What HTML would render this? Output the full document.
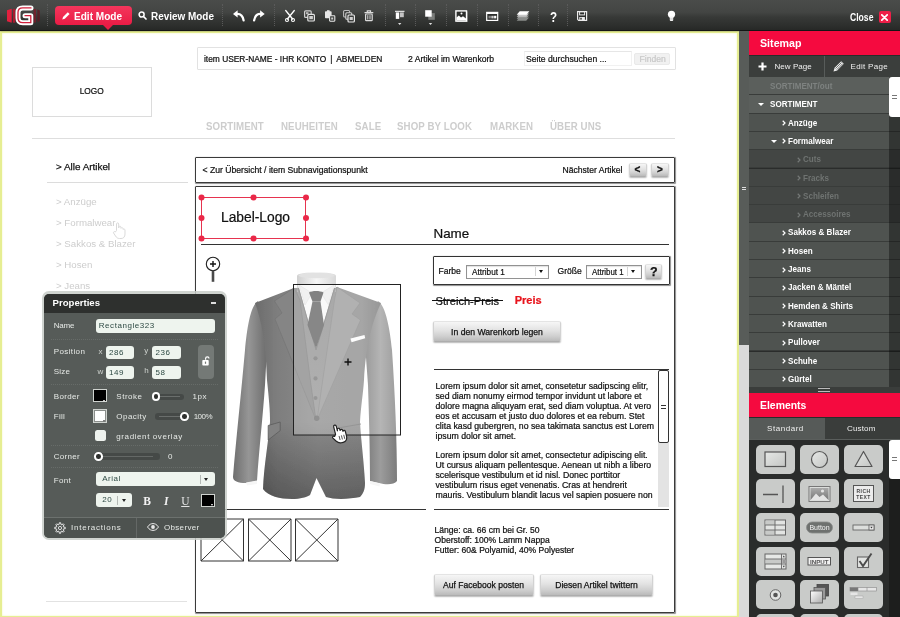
<!DOCTYPE html>
<html>
<head>
<meta charset="utf-8">
<title>Wireframe Editor</title>
<style>
*{box-sizing:border-box;margin:0;padding:0}
html,body{width:900px;height:617px;overflow:hidden;background:#fff;font-family:"Liberation Sans",sans-serif;}
.abs{position:absolute}
#app{position:relative;width:900px;height:617px;overflow:hidden;background:#fff;will-change:transform}
/* toolbar */
#tb{position:absolute;left:0;top:0;width:900px;height:31px;box-shadow:0 0 1.5px rgba(0,0,0,.55);background:linear-gradient(#4a4c4a 0,#434543 40%,#373937 55%,#2c2e2c 85%,#252725 100%);}
.sep{position:absolute;top:4px;height:22px;width:0;border-left:1px dotted #5a5a5a}
.tbt{position:absolute;color:#fff;font-weight:bold;font-size:10.5px;line-height:12px;white-space:nowrap}
/* canvas */
#cv{position:absolute;left:0;top:31px;width:738.5px;height:587px;background:#fff;border:2px solid #e6ee92;box-shadow:inset 0 0 2px 0 #eef4b4}
.t{position:absolute;white-space:nowrap;color:#111;-webkit-text-stroke:.22px}
.nav{position:absolute;top:120.8px;font-size:10.3px;font-weight:bold;color:#cdcdcd;white-space:nowrap;line-height:12px;letter-spacing:.1px;transform-origin:left center;transform:scaleX(.94)}
.ln{position:absolute;font-size:9.7px;color:#cdcdcd;left:56px;line-height:12px;white-space:nowrap}
.btn{position:absolute;background:linear-gradient(#f6f6f6,#e2e2e2 45%,#cfcfcf 75%,#bababa);border:1px solid #d2d2d2;border-top-color:#e4e4e4;border-bottom-color:#adadad;border-radius:2px;font-size:9px;color:#111;text-align:center;white-space:nowrap;box-shadow:0 1px 1.5px rgba(0,0,0,.28);-webkit-text-stroke:.25px}
/* sidebar */
#sb{position:absolute;left:748.5px;top:31px;width:151.5px;height:586px;background:#2a2c2b}
.hd{position:absolute;left:0;width:151px;background:#f50a3f;color:#fff;font-weight:bold;font-size:12.5px}
.row{position:absolute;left:0;width:151.5px;height:18px;background:#4f5350;border-bottom:1px solid #393c3a;color:#fff;font-weight:bold;font-size:9.5px;line-height:18px;white-space:nowrap}
.row.l1{background:#5b5f5c}
.row.l3{background:#434644;color:#6f7371}
.row.dim{color:#7e8280}
.row span{position:absolute;top:0;transform-origin:left center;transform:scaleX(.85)}
.tile{position:absolute;width:39px;height:29px;background:#c9cbc9;border-radius:5px}
/* properties */
#pp{position:absolute;left:41.7px;top:291px;width:185.8px;height:249.3px;border-radius:7px;background:rgba(200,205,200,.85);}
#ppi{position:absolute;left:2.3px;top:2.5px;width:181px;height:244px;border-radius:5px;background:#565b58;overflow:hidden}
.pl{position:absolute;font-size:8px;color:#e6e9e6;line-height:10px;white-space:nowrap;letter-spacing:.55px}
.pin{position:absolute;background:#eef4ee;border-radius:3px;font-size:8px;letter-spacing:.55px;color:#2e4a44;line-height:13.5px;padding-left:3px;white-space:nowrap}
.dot{position:absolute;left:7px;width:167px;height:0;border-top:1px dotted #676c69}
</style>
</head>
<body>
<div id="app">

<!-- ================= CANVAS ================= -->
<div id="cv"></div>
<!-- page content (absolute page coords) -->
<div id="pg" class="abs" style="left:0;top:0;width:739px;height:617px;overflow:hidden">
<!-- logo box -->
<div class="abs" style="left:32px;top:67px;width:120px;height:50px;border:1px solid #dcdcdc"></div>
<div class="t" style="left:79.7px;top:86px;font-size:8.3px;line-height:11px">LOGO</div>
<!-- top bar -->
<div class="abs" style="left:197px;top:47px;width:479px;height:23px;border:1px solid #e2e2e2;border-radius:1px"></div>
<div class="t" style="left:204px;top:53px;font-size:8.4px;line-height:12px">item USER-NAME - IHR KONTO <span style="margin:0 1.8px">|</span> ABMELDEN</div>
<div class="t" style="left:408px;top:53px;font-size:8.6px;line-height:12px">2 Artikel im Warenkorb</div>
<div class="abs" style="left:524px;top:51px;width:108px;height:15px;border:1px solid #f1f1f1;border-top-color:#e6e6e6"></div>
<div class="t" style="left:526px;top:53px;font-size:8.6px;line-height:12px">Seite durchsuchen ...</div>
<div class="abs" style="left:634px;top:52.5px;width:36px;height:12.5px;background:#f1f1f1;border:1px solid #e9e9e9;border-radius:2px"></div>
<div class="t" style="left:639.5px;top:53px;font-size:8.6px;line-height:12px;color:#c9c9c9">Finden</div>
<!-- main nav -->
<div class="nav" style="left:206px">SORTIMENT</div>
<div class="nav" style="left:281px">NEUHEITEN</div>
<div class="nav" style="left:354.5px">SALE</div>
<div class="nav" style="left:396.5px">SHOP BY LOOK</div>
<div class="nav" style="left:489.5px">MARKEN</div>
<div class="nav" style="left:550px">ÜBER UNS</div>
<div class="abs" style="left:32px;top:138px;width:643px;height:1px;background:#dedede"></div>
<!-- left nav -->
<div class="t" style="left:56px;top:160.5px;font-size:9.9px;line-height:12px;color:#111;-webkit-text-stroke:.25px #111">&gt; Alle Artikel</div>
<div class="abs" style="left:47px;top:182px;width:141px;height:1px;background:#dcdcdc"></div>
<div class="ln" style="top:196px">&gt; Anzüge</div>
<div class="ln" style="top:216.5px">&gt; Formalwear</div>
<div class="ln" style="top:237.5px">&gt; Sakkos &amp; Blazer</div>
<div class="ln" style="top:258.5px">&gt; Hosen</div>
<div class="ln" style="top:279.5px">&gt; Jeans</div>
<div class="abs" style="left:46px;top:601px;width:141px;height:1px;background:#e2e2e2"></div>
<svg class="abs" style="left:112px;top:222px" width="15" height="17" viewBox="0 0 13 17" opacity=".55"><path d="M3.5,8.5 L3.5,2 C3.5,0.5 5.7,0.5 5.7,2 L5.7,6 L5.9,4.8 C6.3,3.8 7.8,4 7.9,5 L8,6.3 C8.4,5.3 9.9,5.5 10,6.5 L10.1,7.5 C10.6,6.7 12,7 12,8 L12,12 C12,15 10.5,16.5 8,16.5 L6.5,16.5 C4.5,16.5 3.5,15.5 2.5,14 L0.6,11 C0,9.8 1.5,9 2.3,10 Z" fill="#fff" stroke="#bbb" stroke-width="1" stroke-linejoin="round"/></svg>
<!-- breadcrumb box -->
<div class="abs" style="left:194.5px;top:156.5px;width:480px;height:26.5px;border:1px solid #3a3a3a;border-radius:1px;box-shadow:.7px .7px 1px rgba(0,0,0,.45)"></div>
<div class="t" style="left:202.5px;top:164.5px;font-size:8.65px;line-height:11px">&lt; Zur Übersicht / item Subnavigationspunkt</div>
<div class="t" style="left:562.5px;top:164.5px;font-size:8.57px;line-height:11px">Nächster Artikel</div>
<div class="btn" style="left:628.5px;top:163px;width:18px;height:14px;font-weight:bold;font-size:10px;line-height:12px">&lt;</div>
<div class="btn" style="left:651px;top:163px;width:18px;height:14px;font-weight:bold;font-size:10px;line-height:12px">&gt;</div>
<!-- product box -->
<div class="abs" style="left:194.5px;top:186px;width:480px;height:427px;border:1px solid #3a3a3a;border-radius:1px;box-shadow:.7px .7px 1px rgba(0,0,0,.45)"></div>
<!-- label logo selected -->
<div class="abs" style="left:201px;top:197px;width:105px;height:41.5px;border:1px solid #e6334f"></div>
<div class="t" style="left:221px;top:209px;font-size:13.8px;line-height:18px">Label-Logo</div>
<svg class="abs" style="left:196px;top:192px" width="116" height="52" viewBox="0 0 116 52"><g fill="#ea2848"><circle cx="5.5" cy="5.5" r="3"/><circle cx="57.5" cy="5.5" r="3"/><circle cx="110" cy="5.5" r="3"/><circle cx="5.5" cy="26" r="3"/><circle cx="110" cy="26" r="3"/><circle cx="5.5" cy="46.5" r="3"/><circle cx="57.5" cy="46.5" r="3"/><circle cx="110" cy="46.5" r="3"/></g></svg>
<div class="abs" style="left:201px;top:243.5px;width:468px;height:1px;background:#333"></div>
<div class="t" style="left:433.5px;top:224.5px;font-size:13.4px;line-height:18px">Name</div>
<!-- magnifier -->
<svg class="abs" style="left:204px;top:255px" width="18" height="28" viewBox="0 0 18 28"><circle cx="9" cy="9" r="6.7" fill="#fff" stroke="#222" stroke-width="1.1"/><path d="M6 9h6M9 6v6" stroke="#111" stroke-width="1.4"/><path d="M9 15.8V26.8" stroke="#4a4a4a" stroke-width="2.6"/></svg>
<!-- attribute box -->
<div class="abs" style="left:433.3px;top:256px;width:236.3px;height:29px;border:1px solid #333;border-radius:1px;box-shadow:.7px .7px 1px rgba(0,0,0,.45)"></div>
<div class="t" style="left:438.5px;top:266px;font-size:8.55px;line-height:11px">Farbe</div>
<div class="abs" style="left:466px;top:264.5px;width:82.6px;height:14px;border:1px solid #929292;background:#fff;box-shadow:inset 0 1px 1px rgba(0,0,0,.12)"></div>
<div class="t" style="left:472.2px;top:266.3px;font-size:9.6px;line-height:11px;transform-origin:left center;transform:scaleX(.855)">Attribut 1</div>
<div class="abs" style="left:534.5px;top:267px;width:1px;height:9px;background:#d4d4d4"></div>
<div class="abs" style="left:538.9px;top:270px;border-left:2.5px solid transparent;border-right:2.5px solid transparent;border-top:3.5px solid #111"></div>
<div class="t" style="left:557.5px;top:266px;font-size:8.55px;line-height:11px">Größe</div>
<div class="abs" style="left:585.5px;top:264.5px;width:56.2px;height:14px;border:1px solid #929292;background:#fff;box-shadow:inset 0 1px 1px rgba(0,0,0,.12)"></div>
<div class="t" style="left:592px;top:266.3px;font-size:9.6px;line-height:11px;transform-origin:left center;transform:scaleX(.825)">Attribut 1</div>
<div class="abs" style="left:626.5px;top:267px;width:1px;height:9px;background:#d4d4d4"></div>
<div class="abs" style="left:631.4px;top:270px;border-left:2.5px solid transparent;border-right:2.5px solid transparent;border-top:3.5px solid #111"></div>
<div class="btn" style="left:645.3px;top:263.7px;width:16.8px;height:15.2px;font-weight:bold;font-size:12.5px;line-height:14px">?</div>
<!-- price -->
<div class="t" style="left:435.6px;top:293.6px;font-size:11.1px;line-height:14px">Streich-Preis</div>
<div class="abs" style="left:432.2px;top:300.2px;width:70.8px;height:1px;background:#111"></div>
<div class="t" style="left:514.7px;top:293.3px;font-size:11px;line-height:14px;color:#e8141c;font-weight:bold">Preis</div>
<div class="btn" style="left:433.3px;top:320.7px;width:127.4px;height:21.7px;line-height:20px;font-size:8.65px">In den Warenkorb legen</div>
<!-- text area -->
<div class="abs" style="left:434px;top:369px;width:234.5px;height:1px;background:#333"></div>
<div class="abs" style="left:434px;top:509px;width:234.5px;height:1px;background:#333"></div>
<div class="abs" style="left:657.5px;top:370px;width:11px;height:137px;background:#e3e3e3"></div>
<div class="abs" style="left:657.5px;top:369.5px;width:11px;height:73.5px;background:#fff;border:1px solid #333;border-radius:2px"></div>
<div class="abs" style="left:660.5px;top:405px;width:5px;height:1px;background:#333"></div>
<div class="abs" style="left:660.5px;top:407.5px;width:5px;height:1px;background:#333"></div>
<div class="t" style="left:435.5px;top:380.5px;font-size:8.72px;line-height:10px;white-space:pre">Lorem ipsum dolor sit amet, consetetur sadipscing elitr,
sed diam nonumy eirmod tempor invidunt ut labore et
dolore magna aliquyam erat, sed diam voluptua. At vero
eos et accusam et justo duo dolores et ea rebum. Stet
clita kasd gubergren, no sea takimata sanctus est Lorem
ipsum dolor sit amet.</div>
<div class="t" style="left:435.5px;top:450px;font-size:8.72px;line-height:10px;white-space:pre">Lorem ipsum dolor sit amet, consectetur adipiscing elit.
Ut cursus aliquam pellentesque. Aenean ut nibh a libero
scelerisque vestibulum et id nisl. Donec porttitor
vestibulum risus eget venenatis. Cras at hendrerit
mauris. Vestibulum blandit lacus vel sapien posuere non</div>
<div class="t" style="left:434.5px;top:525px;font-size:8.55px;line-height:10px;white-space:pre">Länge: ca. 66 cm bei Gr. 50
Oberstoff: 100% Lamm Nappa
Futter: 60&amp; Polyamid, 40% Polyester</div>
<div class="btn" style="left:433.5px;top:573.5px;width:100px;height:22px;line-height:20px;font-size:8.55px">Auf Facebook posten</div>
<div class="btn" style="left:540px;top:573.5px;width:113px;height:22px;line-height:20px;font-size:8.6px">Diesen Artikel twittern</div>
<!-- image bottom line + thumbs -->
<div class="abs" style="left:201px;top:509px;width:225px;height:1px;background:#333"></div>
<svg class="abs" style="left:200px;top:518px" width="140" height="44" viewBox="0 0 140 44"><g fill="#fff" stroke="#333" stroke-width="1"><path d="M1 1h42.5v42H1zM1 1l42.5 42M43.5 1L1 43"/><path d="M48.5 1h42.5v42H48.5zM48.5 1l42.5 42M91 1L48.5 43"/><path d="M95.5 1h42.5v42H95.5zM95.5 1l42.5 42M138 1L95.5 43"/></g></svg>
<svg class="abs" style="left:222px;top:262px" width="190" height="248" viewBox="222 262 190 248">
<defs>
<linearGradient id="gb" x1="0" x2="1" y1="0" y2="0"><stop offset="0" stop-color="#6c6c6c"/><stop offset=".18" stop-color="#7e7e7e"/><stop offset=".5" stop-color="#8b8b8b"/><stop offset=".85" stop-color="#888"/><stop offset="1" stop-color="#747474"/></linearGradient>
<linearGradient id="gsl" x1="0" x2="1" y1="0" y2="0"><stop offset="0" stop-color="#6e6e6e"/><stop offset=".45" stop-color="#969696"/><stop offset="1" stop-color="#6a6a6a"/></linearGradient>
<linearGradient id="gsr" x1="0" x2="1" y1="0" y2="0"><stop offset="0" stop-color="#777"/><stop offset=".5" stop-color="#9c9c9c"/><stop offset="1" stop-color="#7c7c7c"/></linearGradient>
<linearGradient id="gv" x1="0" x2="0" y1="0" y2="1"><stop offset="0" stop-color="#8c8c8c"/><stop offset="1" stop-color="#969696"/></linearGradient>
<linearGradient id="gsh" x1="0" x2="0" y1="0" y2="1"><stop offset="0" stop-color="#000" stop-opacity="0"/><stop offset="1" stop-color="#000" stop-opacity=".3"/></linearGradient>
<linearGradient id="gco" x1="0" x2="1" y1="0" y2="0"><stop offset="0" stop-color="#d0d0d0"/><stop offset=".5" stop-color="#f6f6f6"/><stop offset="1" stop-color="#d8d8d8"/></linearGradient>
<filter id="bl" x="-10%" y="-10%" width="120%" height="120%"><feGaussianBlur stdDeviation=".7"/></filter>
</defs>
<g filter="url(#bl)">
<!-- sleeves -->
<path d="M258,301 C250,306 247,330 245,350 C241,395 236,440 233,477 C233,481 238,483 246,483 L257,481 C259,450 263,415 265,385 L268,330 Z" fill="url(#gsl)"/>
<path d="M378,301 C386,306 390,330 392,350 C395,395 397,440 397,481 C394,485 386,485 379,483 L370,481 C370,450 369,415 368,385 L364,330 Z" fill="url(#gsr)"/>
<path d="M246,482.5 L257,480.5 L257,484 L247,485.5 Z" fill="#f6f6f6"/>
<path d="M370,481 L380,483.5 L379.5,486.5 L370,484 Z" fill="#f6f6f6"/>
<!-- body -->
<path d="M294,288 L255,303 C262,322 266,345 267,380 C269,400 270,410 270,422 C268,445 264,465 263,489 C268,496 280,499 292,499 C300,499 307,497 310,495 L316.5,478 L326,497 C335,500 350,499 360,497 C363,494 365,490 365,483 C364,462 361,440 360,422 C361,405 363,395 364,380 C366,345 372,322 381,303 L337,287 Z" fill="url(#gb)"/>
<path d="M270,422 C268,445 264,465 263,489 C268,496 280,499 292,499 C300,499 307,497 310,495 L316.5,478 L326,497 C335,500 350,499 360,497 C363,494 365,490 365,483 C364,462 361,440 360,422 Z" fill="url(#gsh)"/>
<!-- collar cylinder -->
<path d="M297,276 C297,271 336,271 336,276 L336,292 L297,292 Z" fill="url(#gco)"/>
<ellipse cx="316.5" cy="275.5" rx="18" ry="2.8" fill="#e2e2e2"/>
<!-- vest -->
<path d="M297,288 L336,288 L323,400 L316.5,420 L310,400 Z" fill="url(#gv)"/>
<!-- shirt -->
<path d="M298,285 L335,285 L316,349 Z" fill="#f7f7f7"/>
<path d="M299,285 L305,305 L312,293 Z" fill="#ececec" stroke="#d8d8d8" stroke-width=".5"/>
<path d="M334,285 L328.5,305 L321,293 Z" fill="#ececec" stroke="#d8d8d8" stroke-width=".5"/>
<!-- vest V edges -->
<path d="M298.5,288 L316,350 L334.5,288" fill="none" stroke="#787878" stroke-width=".9"/>
<!-- tie -->
<path d="M309,292.5 C312,290.5 320,290.5 323.5,292.5 L320.5,301.5 L312.5,301.5 Z" fill="#585858"/>
<path d="M312.5,301.5 L320.5,301.5 L324,325 L316,348.5 L307.5,325 Z" fill="#5e5e5e"/>
<!-- lapels -->
<path d="M294,288 L274.5,301 L282,313 L275,319 L316,420 L311,385 L300,300 Z" fill="#858585" stroke="#727272" stroke-width=".6"/>
<path d="M337,287 L360,303 L352,314 L360.5,320 L317,420 L322,385 L334.5,300 Z" fill="#979797" stroke="#808080" stroke-width=".6"/>
<!-- buttons -->
<circle cx="315.5" cy="358.3" r="2.1" fill="#757575"/><circle cx="315.5" cy="378.4" r="2.1" fill="#757575"/><circle cx="315.5" cy="398" r="2" fill="#757575"/>
<circle cx="316.7" cy="418.3" r="2.7" fill="#6c6c6c"/>
<!-- pocket square & flap -->
<path d="M350.5,338.5 L364.5,335 L365.2,338.3 L351.5,342.3 Z" fill="#fcfcfc"/>
<path d="M268.2,425.5 L280.2,422 L280.2,430.6 L268.2,440 Z" fill="#828282" stroke="#5c5c5c" stroke-width=".8"/>
<path d="M338,428 L361,424" stroke="#6c6c6c" stroke-width=".8"/>
</g>
<!-- lens -->
<rect x="293.5" y="284.5" width="107" height="150.5" fill="#fff" fill-opacity=".25" stroke="#222" stroke-width="1"/>
<path d="M344.5,362 H351.5 M348,358.5 V365.5" stroke="#111" stroke-width="1.4"/>
<!-- hand cursor -->
<g transform="translate(331,423.5) rotate(-14 7 9) scale(1.2)"><path d="M3.5,8.5 L3.5,2 C3.5,0.5 5.7,0.5 5.7,2 L5.7,6 L5.9,4.8 C6.3,3.8 7.8,4 7.9,5 L8,6.3 C8.4,5.3 9.9,5.5 10,6.5 L10.1,7.5 C10.6,6.7 12,7 12,8 L12,12 C12,15 10.5,16.5 8,16.5 L6.5,16.5 C4.5,16.5 3.5,15.5 2.5,14 L0.6,11 C0,9.8 1.5,9 2.3,10 Z" fill="#fff" stroke="#222" stroke-width="1" stroke-linejoin="round"/><path d="M6,10.5v3.5M8,10.5v3.5M10,10.5v3.5" stroke="#444" stroke-width=".7"/></g>
</svg>
</div>

<!-- ================= TOOLBAR ================= -->
<div id="tb">
<div class="abs" style="left:0;top:30px;width:900px;height:1px;background:#151515"></div>
<!-- logo -->
<svg class="abs" style="left:0;top:0" width="46" height="31" viewBox="0 0 46 31">
 <path d="M7 10.3L11.7 8.8V22.7L7 21.2z" fill="#e2203e"/><path d="M12.9 8.8h2.4V22.7h-2.4z" fill="#a81a2e"/>
 <path d="M33.6 9h2.4V22.5h-2.4z" fill="#7a1a28" opacity=".8"/><path d="M37.3 9.5L39.8 10.5V21l-2.5 1z" fill="#5e1822" opacity=".8"/>
 <path d="M31 7.9H22.7Q18 7.9 18 12.6V18Q18 22.7 22.7 22.7H30.8V15.7H25" fill="none" stroke="#fff" stroke-width="5" stroke-linejoin="round" stroke-linecap="round"/>
 <path d="M31 7.9H22.7Q18 7.9 18 12.6V18Q18 22.7 22.7 22.7H30.8V15.7H25" fill="none" stroke="#d0203c" stroke-width="1.3" stroke-linejoin="round" stroke-linecap="round"/>
</svg>
<div class="sep" style="left:47px"></div>
<!-- edit mode -->
<div class="abs" style="left:55px;top:6px;width:77px;height:19px;border-radius:4px;background:linear-gradient(#f4365c,#ea1c45)"></div>
<div class="abs" style="left:103px;top:25px;width:0;height:0;border-left:5px solid transparent;border-right:5px solid transparent;border-top:5px solid #ea1c45"></div>
<svg class="abs" style="left:62px;top:11px" width="8" height="9" viewBox="0 0 8 9"><path d="M0.3 8.5L1 6 5.8 1.2 7.6 3 2.8 7.8z" fill="#fff"/></svg>
<div class="tbt" style="left:74.2px;top:10px;font-size:11.2px;transform-origin:left center;transform:scaleX(.9)">Edit Mode</div>
<!-- review mode -->
<svg class="abs" style="left:138px;top:11px" width="9" height="9" viewBox="0 0 9 9"><circle cx="3.6" cy="3.6" r="2.5" fill="none" stroke="#fff" stroke-width="1.5"/><path d="M5.5 5.5L8 8" stroke="#fff" stroke-width="1.7" stroke-linecap="round"/></svg>
<div class="tbt" style="left:150.7px;top:10px;font-size:11.2px;transform-origin:left center;transform:scaleX(.888)">Review Mode</div>
<div class="sep" style="left:222px"></div>
<!-- undo / redo -->
<div class="sep" style="left:274px"></div>
<div class="sep" style="left:385px"></div>
<div class="sep" style="left:415px"></div>
<div class="sep" style="left:446px"></div>
<div class="sep" style="left:477px"></div>
<div class="sep" style="left:507.5px"></div>
<div class="sep" style="left:537.5px"></div>
<div class="sep" style="left:566.5px"></div>
<svg class="abs" style="left:0;top:0" width="900" height="31" viewBox="0 0 900 31">
<!-- undo -->
<path d="M233 13.9L237.6 10.3V17.5z" fill="#fff"/><path d="M237 13.8C241 13.6 243 16.5 243.6 20.4" fill="none" stroke="#fff" stroke-width="2.3" stroke-linecap="round"/>
<!-- redo -->
<path d="M264.7 13.9L260.1 10.3V17.5z" fill="#fff"/><path d="M260.7 13.8C256.7 13.6 254.7 16.5 254.1 20.4" fill="none" stroke="#fff" stroke-width="2.3" stroke-linecap="round"/>
<!-- scissors -->
<path d="M285.8 10.6L292.6 19M294.2 10.6L287.4 19" stroke="#fff" stroke-width="1.5" fill="none" stroke-linecap="round"/><circle cx="287" cy="20" r="1.5" fill="none" stroke="#fff" stroke-width="1.1"/><circle cx="293" cy="20" r="1.5" fill="none" stroke="#fff" stroke-width="1.1"/>
<!-- copy -->
<rect x="304.6" y="10.8" width="6.6" height="6.6" rx="1" fill="none" stroke="#cfcfcf" stroke-width="1.2"/><rect x="306" y="12.2" width="2.5" height="2" fill="#bbb"/>
<rect x="307.8" y="14.4" width="6.6" height="6.6" rx="1" fill="#3a3c3a" stroke="#e4e4e4" stroke-width="1.2"/><rect x="309.3" y="16" width="3.6" height="3.2" fill="#cfcfcf"/>
<!-- paste -->
<rect x="325" y="11.2" width="6.6" height="7" rx=".8" fill="#e6e6e6"/><rect x="327" y="10.2" width="2.6" height="1.8" fill="#e6e6e6"/>
<rect x="329.6" y="15.8" width="5.2" height="5.4" rx=".6" fill="#3a3c3a" stroke="#e6e6e6" stroke-width="1.1"/><rect x="331.2" y="17.5" width="2" height="2" fill="#cfcfcf"/>
<!-- duplicate -->
<rect x="343.6" y="10.5" width="6" height="6.5" rx="1" fill="#3a3c3a" stroke="#bdbdbd" stroke-width="1.1"/>
<rect x="345.8" y="12.7" width="6" height="6.5" rx="1" fill="#3a3c3a" stroke="#d2d2d2" stroke-width="1.1"/>
<rect x="348" y="15" width="6.4" height="7" rx="1" fill="#3a3c3a" stroke="#e6e6e6" stroke-width="1.2"/><rect x="349.6" y="17" width="3.2" height="3" fill="#cfcfcf"/>
<!-- trash -->
<path d="M364.5 12.6h8.8M367.3 12.2v-1.4h3.2v1.4" stroke="#dcdcdc" stroke-width="1.2" fill="none"/><rect x="365.6" y="14" width="6.6" height="6.7" rx=".8" fill="none" stroke="#dcdcdc" stroke-width="1.2"/><path d="M367.8 15.2v4.3M370 15.2v4.3" stroke="#dcdcdc" stroke-width="1"/>
<!-- align -->
<rect x="395" y="10.8" width="9.5" height="1" fill="#fff"/><rect x="395.8" y="12.4" width="3.4" height="6.5" fill="#fff"/><rect x="400" y="12.4" width="3.8" height="4.8" fill="#c4c4c4"/><path d="M398 23h3.4l-1.7 2z" fill="#e0e0e0"/>
<!-- layer order -->
<rect x="428.3" y="13.1" width="6.5" height="6.7" fill="#7b7d7b"/><rect x="425.2" y="10.2" width="6.5" height="6.5" fill="#fff"/><path d="M428.8 23h3.4l-1.7 2z" fill="#e0e0e0"/>
<!-- image -->
<rect x="456.6" y="11.4" width="11" height="10.6" fill="#8a8c8a"/><rect x="455.9" y="10.9" width="10.6" height="10.2" fill="#2c2e2c" stroke="#fff" stroke-width="1.4"/><path d="M456.5 20.4V17.5L458.8 15.6 461 17.6 463 16.2 466 18.5V20.4z" fill="#fff"/><circle cx="461.5" cy="13.6" r="1" fill="#fff"/>
<!-- form -->
<rect x="486.7" y="12.4" width="11" height="8" fill="#2c2e2c" stroke="#fff" stroke-width="1.2"/><rect x="486.7" y="12.4" width="11" height="1.6" fill="#fff"/><rect x="488.5" y="15.8" width="2.4" height="2.6" fill="#888"/><rect x="491.3" y="15.8" width="2.4" height="2.6" fill="#ccc"/><rect x="494.1" y="15.8" width="2.2" height="2.6" fill="#fff"/>
<!-- layers -->
<path d="M519.5 15.6h9.5l-2.8 3.2h-9.5z" fill="#9a9c9a"/><path d="M519.5 17.6h9.5l-2.8 3.2h-9.5z" fill="#8a8c8a"/><path d="M519.5 13.6h9.5l-2.8 3.2h-9.5z" fill="#c6c6c6"/><path d="M519.7 11.2h9.7l-3 3.5h-9.7z" fill="#fff"/>
<!-- save -->
<path d="M577.6 11.7h9v8.6h-8l-1-1z" fill="#2c2e2c" stroke="#ececec" stroke-width="1.2"/><rect x="579.6" y="11.7" width="5" height="3.2" fill="none" stroke="#ececec" stroke-width="1"/><rect x="579.3" y="17" width="5.6" height="3.3" fill="#ececec"/><rect x="580.3" y="17.8" width="1.4" height="1.8" fill="#2c2e2c"/>
<!-- bulb -->
<circle cx="671.5" cy="14.3" r="3.6" fill="#fff"/><path d="M669.8 16.5h3.4v3.6q0 .9-.9.9h-1.6q-.9 0-.9-.9z" fill="#f2f2f2"/><path d="M670.2 19h2.6" stroke="#999" stroke-width=".5"/>
</svg>
<div class="tbt" style="left:549.5px;top:8.5px;font-size:14.5px;line-height:17px;transform-origin:left center;transform:scaleX(.8)">?</div>
<!-- close -->
<div class="tbt" style="left:849.5px;top:10.5px;font-size:10.5px;transform-origin:left center;transform:scaleX(.82)">Close</div>
<div class="abs" style="left:878.5px;top:11px;width:12px;height:12px;border-radius:2px;background:#ee1f48"></div>
<svg class="abs" style="left:881px;top:13.5px" width="7" height="7" viewBox="0 0 7 7"><path d="M0.8 0.8L6.2 6.2M6.2 0.8L0.8 6.2" stroke="#fff" stroke-width="1.7" stroke-linecap="round"/></svg>
</div>

<!-- ================= SCROLL STRIP ================= -->
<div class="abs" style="left:738.5px;top:31px;width:10px;height:314px;background:#585c59"></div>
<div class="abs" style="left:738.5px;top:345px;width:10px;height:272px;background:#dadada"></div>
<div class="abs" style="left:741.5px;top:186.5px;width:4px;height:1px;background:#ddd"></div><div class="abs" style="left:741.5px;top:189px;width:4px;height:1px;background:#ddd"></div>

<!-- ================= SIDEBAR ================= -->
<div id="sb">
<div class="hd" style="top:0;height:24px;line-height:23px"><span style="position:absolute;left:11.5px;top:0;font-size:11.6px;transform-origin:left center;transform:scaleX(.92)">Sitemap</span></div>
<div class="abs" style="left:0;top:24px;width:151px;height:22px;background:#3b3e3c;border-top:1px solid #2a2c2a"></div>
<div class="abs" style="left:75px;top:25px;width:1px;height:21px;background:#585c5a"></div>
<svg class="abs" style="left:9px;top:31px" width="9" height="9" viewBox="0 0 9 9"><path d="M4.5 0.5v8M0.5 4.5h8" stroke="#fff" stroke-width="2.2"/></svg>
<div class="pl" style="left:26px;top:30.5px;color:#f0f0f0;letter-spacing:.05px">New Page</div>
<svg class="abs" style="left:84px;top:29px" width="12" height="12" viewBox="0 0 12 12"><path d="M0.5 11.5L1.6 7.8 8.2 1.2 10.8 3.8 4.2 10.4z" fill="#eee"/><path d="M2.5 8.5L8.5 2.5M3.8 9.6L9.8 3.6" stroke="#3b3e3c" stroke-width=".7"/></svg>
<div class="pl" style="left:102px;top:30.5px;color:#f0f0f0;letter-spacing:.3px">Edit Page</div>
<div class="row l1 dim" style="top:46px;height:18.3px"><span style="left:21px">SORTIMENT/out</span></div>
<div class="row l1" style="top:64.3px;height:18.3px"><span style="left:21px">SORTIMENT</span></div>
<div class="abs" style="left:9.5px;top:71.89999999999999px;border-left:3.2px solid transparent;border-right:3.2px solid transparent;border-top:3.6px solid #fff"></div>
<div class="row l2" style="top:82.6px;height:18.3px"><svg style="position:absolute;left:33px;top:6.5px" width="4" height="6" viewBox="0 0 4 6"><path d="M0.7 0.8L3 3 0.7 5.2" fill="none" stroke="#fff" stroke-width="1.2"/></svg><span style="left:39.2px">Anzüge</span></div>
<div class="row l2" style="top:100.9px;height:18.3px"><svg style="position:absolute;left:33px;top:6.5px" width="4" height="6" viewBox="0 0 4 6"><path d="M0.7 0.8L3 3 0.7 5.2" fill="none" stroke="#fff" stroke-width="1.2"/></svg><span style="left:39.2px">Formalwear</span></div>
<div class="abs" style="left:22.2px;top:108.5px;border-left:3.2px solid transparent;border-right:3.2px solid transparent;border-top:3.6px solid #fff"></div>
<div class="row l3" style="top:119.2px;height:18.3px"><svg style="position:absolute;left:48.099999999999994px;top:6.5px" width="4" height="6" viewBox="0 0 4 6"><path d="M0.7 0.8L3 3 0.7 5.2" fill="none" stroke="#747876" stroke-width="1.2"/></svg><span style="left:54.3px">Cuts</span></div>
<div class="row l3" style="top:137.5px;height:18.3px"><svg style="position:absolute;left:48.099999999999994px;top:6.5px" width="4" height="6" viewBox="0 0 4 6"><path d="M0.7 0.8L3 3 0.7 5.2" fill="none" stroke="#747876" stroke-width="1.2"/></svg><span style="left:54.3px">Fracks</span></div>
<div class="row l3" style="top:155.8px;height:18.3px"><svg style="position:absolute;left:48.099999999999994px;top:6.5px" width="4" height="6" viewBox="0 0 4 6"><path d="M0.7 0.8L3 3 0.7 5.2" fill="none" stroke="#747876" stroke-width="1.2"/></svg><span style="left:54.3px">Schleifen</span></div>
<div class="row l3" style="top:174.1px;height:18.3px"><svg style="position:absolute;left:48.099999999999994px;top:6.5px" width="4" height="6" viewBox="0 0 4 6"><path d="M0.7 0.8L3 3 0.7 5.2" fill="none" stroke="#747876" stroke-width="1.2"/></svg><span style="left:54.3px">Accessoires</span></div>
<div class="row l2" style="top:192.4px;height:18.3px"><svg style="position:absolute;left:33px;top:6.5px" width="4" height="6" viewBox="0 0 4 6"><path d="M0.7 0.8L3 3 0.7 5.2" fill="none" stroke="#fff" stroke-width="1.2"/></svg><span style="left:39.2px">Sakkos &amp; Blazer</span></div>
<div class="row l2" style="top:210.7px;height:18.3px"><svg style="position:absolute;left:33px;top:6.5px" width="4" height="6" viewBox="0 0 4 6"><path d="M0.7 0.8L3 3 0.7 5.2" fill="none" stroke="#fff" stroke-width="1.2"/></svg><span style="left:39.2px">Hosen</span></div>
<div class="row l2" style="top:229px;height:18.3px"><svg style="position:absolute;left:33px;top:6.5px" width="4" height="6" viewBox="0 0 4 6"><path d="M0.7 0.8L3 3 0.7 5.2" fill="none" stroke="#fff" stroke-width="1.2"/></svg><span style="left:39.2px">Jeans</span></div>
<div class="row l2" style="top:247.3px;height:18.3px"><svg style="position:absolute;left:33px;top:6.5px" width="4" height="6" viewBox="0 0 4 6"><path d="M0.7 0.8L3 3 0.7 5.2" fill="none" stroke="#fff" stroke-width="1.2"/></svg><span style="left:39.2px">Jacken &amp; Mäntel</span></div>
<div class="row l2" style="top:265.6px;height:18.3px"><svg style="position:absolute;left:33px;top:6.5px" width="4" height="6" viewBox="0 0 4 6"><path d="M0.7 0.8L3 3 0.7 5.2" fill="none" stroke="#fff" stroke-width="1.2"/></svg><span style="left:39.2px">Hemden &amp; Shirts</span></div>
<div class="row l2" style="top:283.9px;height:18.3px"><svg style="position:absolute;left:33px;top:6.5px" width="4" height="6" viewBox="0 0 4 6"><path d="M0.7 0.8L3 3 0.7 5.2" fill="none" stroke="#fff" stroke-width="1.2"/></svg><span style="left:39.2px">Krawatten</span></div>
<div class="row l2" style="top:302.2px;height:18.3px"><svg style="position:absolute;left:33px;top:6.5px" width="4" height="6" viewBox="0 0 4 6"><path d="M0.7 0.8L3 3 0.7 5.2" fill="none" stroke="#fff" stroke-width="1.2"/></svg><span style="left:39.2px">Pullover</span></div>
<div class="row l2" style="top:320.5px;height:18.3px"><svg style="position:absolute;left:33px;top:6.5px" width="4" height="6" viewBox="0 0 4 6"><path d="M0.7 0.8L3 3 0.7 5.2" fill="none" stroke="#fff" stroke-width="1.2"/></svg><span style="left:39.2px">Schuhe</span></div>
<div class="row l2" style="top:338.8px;height:18.3px"><svg style="position:absolute;left:33px;top:6.5px" width="4" height="6" viewBox="0 0 4 6"><path d="M0.7 0.8L3 3 0.7 5.2" fill="none" stroke="#fff" stroke-width="1.2"/></svg><span style="left:39.2px">Gürtel</span></div>
<div class="abs" style="left:140.5px;top:46px;width:11px;height:311px;background:rgba(0,0,0,.36)"></div>
<div class="abs" style="left:140px;top:46px;width:11px;height:40px;background:#fff;border-radius:3px 0 0 3px"></div>
<div class="abs" style="left:143px;top:64px;width:5px;height:1px;background:#777"></div><div class="abs" style="left:143px;top:66.5px;width:5px;height:1px;background:#777"></div>
<div class="abs" style="left:0;top:356px;width:151px;height:6px;background:#3a3d3b"></div>
<div class="abs" style="left:69px;top:357px;width:12px;height:1.3px;background:#bbb"></div><div class="abs" style="left:69px;top:359.5px;width:12px;height:1.3px;background:#bbb"></div>
<div class="hd" style="top:362px;height:24px;line-height:23px"><span style="position:absolute;left:11.5px;top:0;font-size:11.6px;transform-origin:left center;transform:scaleX(.9)">Elements</span></div>
<div class="abs" style="left:0;top:387px;width:76px;height:21px;background:#565a58"></div>
<div class="abs" style="left:76px;top:387px;width:75px;height:21px;background:#3a3d3b"></div>
<div class="abs" style="left:0;top:408px;width:151px;height:1px;background:#5a5e5c"></div>
<div class="pl" style="left:18.5px;top:392.5px;color:#f0f0f0">Standard</div>
<div class="pl" style="left:98.5px;top:392.5px;color:#f0f0f0;letter-spacing:.15px">Custom</div>
<div class="abs" style="left:140px;top:409px;width:11px;height:177px;background:#1d1e1d"></div>
<div class="abs" style="left:140px;top:409px;width:11px;height:39px;background:#fff;border-radius:3px 0 0 3px"></div>
<div class="abs" style="left:143px;top:426px;width:5px;height:1px;background:#777"></div><div class="abs" style="left:143px;top:428.5px;width:5px;height:1px;background:#777"></div>
<div class="tile" id="t00" style="left:7px;top:414.3px"></div>
<div class="tile" id="t01" style="left:51px;top:414.3px"></div>
<div class="tile" id="t02" style="left:95px;top:414.3px"></div>
<div class="tile" id="t10" style="left:7px;top:447.9px"></div>
<div class="tile" id="t11" style="left:51px;top:447.9px"></div>
<div class="tile" id="t12" style="left:95px;top:447.9px"></div>
<div class="tile" id="t20" style="left:7px;top:482px"></div>
<div class="tile" id="t21" style="left:51px;top:482px"></div>
<div class="tile" id="t22" style="left:95px;top:482px"></div>
<div class="tile" id="t30" style="left:7px;top:515.6px"></div>
<div class="tile" id="t31" style="left:51px;top:515.6px"></div>
<div class="tile" id="t32" style="left:95px;top:515.6px"></div>
<div class="tile" id="t40" style="left:7px;top:549.2px"></div>
<div class="tile" id="t41" style="left:51px;top:549.2px"></div>
<div class="tile" id="t42" style="left:95px;top:549.2px"></div>
<div class="tile" id="t50" style="left:7px;top:583px"></div>
<div class="tile" id="t51" style="left:51px;top:583px"></div>
<div class="tile" id="t52" style="left:95px;top:583px"></div>
<svg width="0" height="0" style="position:absolute"><defs>
<linearGradient id="tg" x1="0" x2="1" y1="0" y2="1"><stop offset="0" stop-color="#e6e8e6"/><stop offset="1" stop-color="#c4c6c4"/></linearGradient>
<linearGradient id="tg2" x1="0" x2="0" y1="0" y2="1"><stop offset="0" stop-color="#aaa"/><stop offset="1" stop-color="#777"/></linearGradient>
<linearGradient id="tg3" x1="0" x2="1" y1="0" y2="1"><stop offset="0" stop-color="#fff"/><stop offset="1" stop-color="#aaa"/></linearGradient>
</defs></svg>
<svg class="abs" style="left:7px;top:414.3px" width="39" height="29" viewBox="0 0 39 29"><rect x="9" y="7" width="20.5" height="14.5" fill="url(#tg)" stroke="#555" stroke-width="1.2"/></svg>
<svg class="abs" style="left:51px;top:414.3px" width="39" height="29" viewBox="0 0 39 29"><circle cx="19.5" cy="14.5" r="8" fill="url(#tg)" stroke="#555" stroke-width="1.2"/></svg>
<svg class="abs" style="left:95px;top:414.3px" width="39" height="29" viewBox="0 0 39 29"><path d="M19.5 6.5L28 21.5H11z" fill="url(#tg)" stroke="#555" stroke-width="1.2" stroke-linejoin="round"/></svg>
<svg class="abs" style="left:7px;top:447.9px" width="39" height="29" viewBox="0 0 39 29"><path d="M7 15.5H22M27 6.5V24" stroke="#555" stroke-width="1.3"/></svg>
<svg class="abs" style="left:51px;top:447.9px" width="39" height="29" viewBox="0 0 39 29"><rect x="9" y="7.5" width="21" height="15" fill="#dcdedc" stroke="#777" stroke-width="1"/><rect x="10.5" y="9" width="18" height="12" fill="url(#tg2)"/><path d="M10.5 21L16 14.5 19.5 18 23 15.5 28.5 21z" fill="#e4e4e4"/><circle cx="22.5" cy="12" r="1.6" fill="#e4e4e4"/></svg>
<svg class="abs" style="left:95px;top:447.9px" width="39" height="29" viewBox="0 0 39 29"><rect x="9.5" y="6.5" width="20" height="16" fill="#ececec" stroke="#555" stroke-width="1"/><text x="19.5" y="13.5" font-family="Liberation Sans" font-weight="bold" font-size="5" text-anchor="middle" fill="#444" letter-spacing=".4">RICH</text><text x="19.5" y="19.5" font-family="Liberation Sans" font-weight="bold" font-size="5" text-anchor="middle" fill="#444" letter-spacing=".4">TEXT</text></svg>
<svg class="abs" style="left:7px;top:482px" width="39" height="29" viewBox="0 0 39 29"><rect x="9" y="7" width="20.5" height="15" fill="#e2e4e2" stroke="#666" stroke-width="1"/><rect x="9.5" y="7.5" width="9.5" height="4.5" fill="#c8cac8"/><rect x="9.5" y="17" width="9.5" height="4.5" fill="#c8cac8"/><path d="M9 12H29.5M9 17H29.5M19 7V22" stroke="#666" stroke-width=".9"/></svg>
<svg class="abs" style="left:51px;top:482px" width="39" height="29" viewBox="0 0 39 29"><rect x="6.5" y="9" width="26" height="11" rx="5.5" fill="#6e716f" stroke="#8a8d8b" stroke-width=".8"/><text x="19.5" y="17.3" font-family="Liberation Sans" font-size="7" text-anchor="middle" fill="#f4f4f4">Button</text></svg>
<svg class="abs" style="left:95px;top:482px" width="39" height="29" viewBox="0 0 39 29"><rect x="9" y="12" width="21" height="5" fill="#dcdedc" stroke="#666" stroke-width=".9"/><rect x="25" y="12" width="5" height="5" fill="#eee" stroke="#666" stroke-width=".9"/><path d="M26.3 13.7h2.4l-1.2 1.8z" fill="#333"/></svg>
<svg class="abs" style="left:7px;top:515.6px" width="39" height="29" viewBox="0 0 39 29"><rect x="9" y="7" width="21" height="15" fill="#e6e8e6" stroke="#666" stroke-width="1"/><rect x="9.5" y="12" width="16" height="5" fill="#c8cac8"/><path d="M9 12H30M9 17H30M25.5 7V22" stroke="#666" stroke-width=".9"/><path d="M26.8 10.3h2l-1-1.8zM26.8 18.7h2l-1 1.8z" fill="#333"/><rect x="26.3" y="12.5" width="3.2" height="4" fill="#999"/></svg>
<svg class="abs" style="left:51px;top:515.6px" width="39" height="29" viewBox="0 0 39 29"><rect x="8" y="10.5" width="22.5" height="7.5" fill="#f2f2f2" stroke="#555" stroke-width="1"/><text x="19.3" y="16.8" font-family="Liberation Sans" font-weight="bold" font-size="6.2" text-anchor="middle" fill="#555">INPUT</text></svg>
<svg class="abs" style="left:95px;top:515.6px" width="39" height="29" viewBox="0 0 39 29"><rect x="13.5" y="10" width="11" height="10.5" fill="#e2e4e2" stroke="#666" stroke-width="1.1"/><path d="M15.5 14L19 19 27.5 6.5" fill="none" stroke="#4c4c4c" stroke-width="1.9"/></svg>
<svg class="abs" style="left:7px;top:549.2px" width="39" height="29" viewBox="0 0 39 29"><circle cx="19.5" cy="15" r="5.3" fill="#e2e4e2" stroke="#666" stroke-width="1"/><circle cx="19.5" cy="15" r="2.3" fill="#555"/></svg>
<svg class="abs" style="left:51px;top:549.2px" width="39" height="29" viewBox="0 0 39 29"><rect x="17" y="4.5" width="11.5" height="11.5" fill="#555" stroke="#444" stroke-width=".8"/><rect x="14" y="7.5" width="11.5" height="11.5" fill="#999" stroke="#555" stroke-width=".8"/><rect x="10.5" y="11" width="12" height="12" fill="url(#tg3)" stroke="#555" stroke-width=".8"/></svg>
<svg class="abs" style="left:95px;top:549.2px" width="39" height="29" viewBox="0 0 39 29"><rect x="6" y="7.5" width="26.5" height="3.5" fill="#e6e6e6" stroke="#888" stroke-width=".6"/><rect x="6" y="7.5" width="8" height="3.5" fill="#777"/><path d="M14 7.5v3.5M23 7.5v3.5" stroke="#888" stroke-width=".6"/><rect x="6.5" y="12.5" width="7" height="2.5" fill="#e6e6e6"/><rect x="11" y="16" width="8" height="2.5" fill="#e6e6e6" stroke="#999" stroke-width=".4"/></svg>
</div>

<!-- ================= PROPERTIES ================= -->
<div id="pp"><div id="ppi">
<div class="abs" style="left:0;top:0;width:181px;height:19px;background:#2e302e"></div>
<div class="abs" style="left:8.6px;top:3.5px;color:#fff;font-weight:bold;font-size:9.6px;line-height:12px;white-space:nowrap">Properties</div>
<div class="abs" style="left:167.5px;top:8.8px;width:5px;height:1.3px;background:#ddd"></div>
<div class="pl" style="left:9.8px;top:27.4px;letter-spacing:-0.25px">Name</div>
<div class="pin" style="left:51.8px;top:25.7px;width:119.2px;height:13.8px">Rectangle323</div>
<div class="dot" style="top:45.3px"></div>
<div class="pl" style="left:9.8px;top:53.3px;letter-spacing:0.37px">Position</div>
<div class="pl" style="left:54.4px;top:53.3px;color:#cfd3cf">x</div>
<div class="pin" style="left:62.1px;top:52.1px;width:28.2px;height:13.4px">286</div>
<div class="pl" style="left:100.3px;top:52.6px;color:#cfd3cf">y</div>
<div class="pin" style="left:108.5px;top:52.1px;width:28.2px;height:13.4px">236</div>
<div class="pl" style="left:9.8px;top:73.6px;letter-spacing:0.18px">Size</div>
<div class="pl" style="left:53.6px;top:73.6px;color:#cfd3cf">w</div>
<div class="pin" style="left:62.1px;top:72.1px;width:28.2px;height:13.6px">149</div>
<div class="pl" style="left:100.3px;top:72.9px;color:#cfd3cf">h</div>
<div class="pin" style="left:108.5px;top:72.1px;width:28.2px;height:13.6px">58</div>
<div class="abs" style="left:154.5px;top:51.1px;width:15.8px;height:34.6px;border-radius:4px;background:#747976"></div>
<svg class="abs" style="left:158.4px;top:62.8px" width="8" height="10" viewBox="0 0 8 10"><path d="M3.6 3.8V2.6a1.7 1.7 0 0 1 3.4 0" fill="none" stroke="#fff" stroke-width="1.2"/><rect x="0.3" y="4" width="6.4" height="5.6" rx=".8" fill="#fff"/><rect x="2.9" y="5.6" width="1.2" height="2.2" fill="#747976"/></svg>
<div class="dot" style="top:90.8px"></div>
<div class="pl" style="left:9.8px;top:98.8px;letter-spacing:0.3px">Border</div>
<div class="abs" style="left:49.5px;top:95.7px;width:13.5px;height:13.3px;background:#000;border:1px solid #cfd3cf"></div>
<div class="abs" style="left:59px;top:106px;border-left:1.7px solid transparent;border-right:1.7px solid transparent;border-top:2.2px solid #fff"></div>
<div class="pl" style="left:72.3px;top:98.8px;letter-spacing:0.53px">Stroke</div>
<div class="abs" style="left:109px;top:100px;width:31.5px;height:6.4px;border-radius:3.2px;background:#454947"></div>
<div class="abs" style="left:114px;top:102.8px;width:22px;height:1px;background:#6a6e6c"></div>
<div class="abs" style="left:108.7px;top:99.7px;width:8.6px;height:8.6px;margin:-.8px 0 0 -.8px;border-radius:50%;background:#2e302e;border:2.3px solid #fff"></div>
<div class="pl" style="left:148.6px;top:98.8px;letter-spacing:0.56px">1px</div>
<div class="pl" style="left:9.8px;top:118.5px;letter-spacing:0.3px">Fill</div>
<div class="abs" style="left:49.5px;top:115.8px;width:13.5px;height:13.3px;background:#fff;border:1px solid #cfd3cf;box-shadow:inset 0 0 0 1px #8a8e8b"></div>
<div class="abs" style="left:59px;top:126px;border-left:1.7px solid transparent;border-right:1.7px solid transparent;border-top:2.2px solid #555"></div>
<div class="pl" style="left:72.3px;top:118.5px;letter-spacing:0.48px">Opacity</div>
<div class="abs" style="left:111.2px;top:119.7px;width:33.4px;height:6.4px;border-radius:3.2px;background:#454947"></div>
<div class="abs" style="left:115px;top:122.5px;width:22px;height:1px;background:#6a6e6c"></div>
<div class="abs" style="left:137.1px;top:119.4px;width:8.6px;height:8.6px;margin:-.8px 0 0 -.8px;border-radius:50%;background:#2e302e;border:2.3px solid #fff"></div>
<div class="pl" style="left:149.7px;top:118.5px;letter-spacing:-0.5px">100%</div>
<div class="abs" style="left:50.8px;top:136.5px;width:10.8px;height:11px;border-radius:2.5px;background:#eef2ee"></div>
<div class="pl" style="left:72.3px;top:138.5px;letter-spacing:0.6px">gradient overlay</div>
<div class="dot" style="top:151.8px"></div>
<div class="pl" style="left:9.8px;top:158.5px;letter-spacing:0.29px">Corner</div>
<div class="abs" style="left:51px;top:159.7px;width:64.7px;height:6.4px;border-radius:3.2px;background:#454947"></div>
<div class="abs" style="left:59px;top:162.5px;width:50px;height:1px;background:#646866"></div>
<div class="abs" style="left:50.9px;top:159.4px;width:8.6px;height:8.6px;margin:-.8px 0 0 -.8px;border-radius:50%;background:#2e302e;border:2.3px solid #fff"></div>
<div class="pl" style="left:124px;top:158.5px">0</div>
<div class="dot" style="top:173.5px"></div>
<div class="pl" style="left:9.8px;top:182.4px;letter-spacing:0.32px">Font</div>
<div class="pin" style="left:52.2px;top:178.6px;width:118.7px;height:14.1px;padding-left:6px;line-height:13.5px">Arial</div>
<div class="abs" style="left:155.6px;top:181px;width:1px;height:9.5px;background:#b5bab6"></div>
<div class="abs" style="left:160.4px;top:184.3px;border-left:2.6px solid transparent;border-right:2.6px solid transparent;border-top:3.6px solid #222"></div>
<div class="pin" style="left:52.2px;top:199.8px;width:36.2px;height:14.1px;padding-left:6px;line-height:13.5px">20</div>
<div class="abs" style="left:73.4px;top:202.2px;width:1px;height:9.5px;background:#b5bab6"></div>
<div class="abs" style="left:78.2px;top:205.5px;border-left:2.6px solid transparent;border-right:2.6px solid transparent;border-top:3.6px solid #222"></div>
<div class="abs" style="left:99.3px;top:200px;font-family:'Liberation Serif',serif;font-weight:bold;font-size:11.5px;line-height:14px;color:#f2f2f2">B</div>
<div class="abs" style="left:120px;top:200px;font-family:'Liberation Serif',serif;font-style:italic;font-weight:bold;font-size:11.5px;line-height:14px;color:#f2f2f2">I</div>
<div class="abs" style="left:137.2px;top:200px;font-family:'Liberation Serif',serif;font-size:11.5px;line-height:14px;color:#e4e4e4;text-decoration:underline">U</div>
<div class="abs" style="left:157px;top:200px;width:13.9px;height:13.4px;background:#000;border:1px solid #cfd3cf"></div>
<div class="abs" style="left:166.8px;top:210.3px;border-left:1.7px solid transparent;border-right:1.7px solid transparent;border-top:2.2px solid #fff"></div>
<div class="abs" style="left:0;top:223.2px;width:181px;height:21px;background:#4d524f;border-top:1px solid #6c716e"></div>
<div class="abs" style="left:91.7px;top:224px;width:1px;height:20px;background:#646866"></div>
<svg class="abs" style="left:10px;top:228px" width="12" height="12" viewBox="0 0 12 12"><path d="M9.6 5.14 L11.25 5.29 L11.25 6.71 L9.6 6.86 L9.15 7.93 L10.21 9.22 L9.22 10.21 L7.93 9.15 L6.86 9.6 L6.71 11.25 L5.29 11.25 L5.14 9.6 L4.07 9.15 L2.78 10.21 L1.79 9.22 L2.85 7.93 L2.4 6.86 L0.75 6.71 L0.75 5.29 L2.4 5.14 L2.85 4.07 L1.79 2.78 L2.78 1.79 L4.07 2.85 L5.14 2.4 L5.29 0.75 L6.71 0.75 L6.86 2.4 L7.93 2.85 L9.22 1.79 L10.21 2.78 L9.15 4.07Z" fill="none" stroke="#e8e8e8" stroke-width="1" stroke-linejoin="round"/><circle cx="6" cy="6" r="1.6" fill="none" stroke="#e8e8e8" stroke-width=".9"/></svg>
<div class="pl" style="left:27.1px;top:229.5px;letter-spacing:0.75px">Interactions</div>
<svg class="abs" style="left:103px;top:229.7px" width="12" height="8" viewBox="0 0 12 8"><path d="M0.5 4C2.5 1 4.5 0.6 6 0.6S9.5 1 11.5 4C9.5 7 7.5 7.4 6 7.4S2.5 7 0.5 4z" fill="none" stroke="#e8e8e8" stroke-width="1"/><circle cx="6" cy="4" r="1.9" fill="#e8e8e8"/></svg>
<div class="pl" style="left:119.9px;top:229.5px;letter-spacing:0.35px">Observer</div>
</div></div>

</div>
</body>
</html>
